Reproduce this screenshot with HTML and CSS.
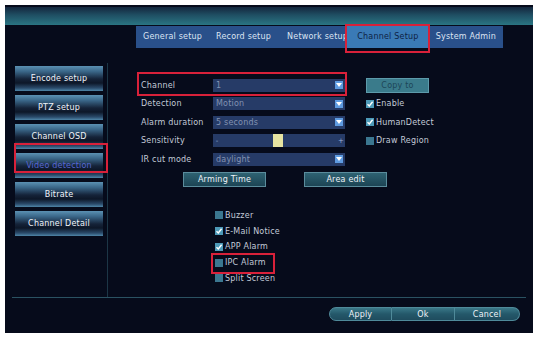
FILE: index.html
```html
<!DOCTYPE html>
<html>
<head>
<meta charset="utf-8">
<link rel="stylesheet" href="styles.css">
</head>
<body>
<div class="screen">
  <div class="titlebar"></div>
  <div class="tabs">
    <div class="tab">General setup</div>
    <div class="tab">Record setup</div>
    <div class="tab">Network setup</div>
    <div class="tab active">Channel Setup</div>
    <div class="tab">System Admin</div>
  </div>
  <div class="main">
    <div class="sidebar">
      <div class="side-btn">Encode setup</div>
      <div class="side-btn">PTZ setup</div>
      <div class="side-btn">Channel OSD</div>
      <div class="side-btn selected">Video detection</div>
      <div class="side-btn">Bitrate</div>
      <div class="side-btn">Channel Detail</div>
    </div>
    <div class="content">
      <div class="form">
        <div class="row">
          <div class="pair marked">
            <span class="label">Channel</span>
            <div class="select"><span class="val">1</span><span class="arrow"></span></div>
          </div>
          <div class="right"><div class="copy-btn">Copy to</div></div>
        </div>
        <div class="row">
          <div class="pair">
            <span class="label">Detection</span>
            <div class="select"><span class="val">Motion</span><span class="arrow"></span></div>
          </div>
          <div class="right"><span class="cb on"><svg viewBox="0 0 8 8"><polyline points="1.5,4.2 3.3,6 6.6,1.8"/></svg></span><span class="cb-label">Enable</span></div>
        </div>
        <div class="row">
          <div class="pair">
            <span class="label">Alarm duration</span>
            <div class="select"><span class="val">5 seconds</span><span class="arrow"></span></div>
          </div>
          <div class="right"><span class="cb on"><svg viewBox="0 0 8 8"><polyline points="1.5,4.2 3.3,6 6.6,1.8"/></svg></span><span class="cb-label">HumanDetect</span></div>
        </div>
        <div class="row">
          <div class="pair">
            <span class="label">Sensitivity</span>
            <div class="select slider"><span class="pm">-</span><span class="track"><span class="thumb"></span></span><span class="pm">+</span></div>
          </div>
          <div class="right"><span class="cb"></span><span class="cb-label">Draw Region</span></div>
        </div>
        <div class="row">
          <div class="pair">
            <span class="label">IR cut mode</span>
            <div class="select"><span class="val">daylight</span><span class="arrow"></span></div>
          </div>
        </div>
      </div>
      <div class="actions">
        <div class="act-btn">Arming Time</div>
        <div class="act-btn">Area edit</div>
      </div>
      <div class="checks">
        <div class="check"><span class="cb"></span><span class="cb-label">Buzzer</span></div>
        <div class="check"><span class="cb on"><svg viewBox="0 0 8 8"><polyline points="1.5,4.2 3.3,6 6.6,1.8"/></svg></span><span class="cb-label">E-Mail Notice</span></div>
        <div class="check"><span class="cb on"><svg viewBox="0 0 8 8"><polyline points="1.5,4.2 3.3,6 6.6,1.8"/></svg></span><span class="cb-label">APP Alarm</span></div>
        <div class="check marked-ipc"><span class="cb"></span><span class="cb-label">IPC Alarm</span></div>
        <div class="check"><span class="cb"></span><span class="cb-label">Split Screen</span></div>
      </div>
    </div>
  </div>
  <div class="footer">
    <div class="btn-group">
      <div class="foot-btn first">Apply</div>
      <div class="foot-btn">Ok</div>
      <div class="foot-btn last">Cancel</div>
    </div>
  </div>
</div>
</body>
</html>
```
FILE: styles.css
```css
* { box-sizing: border-box; }
body {
  margin: 0;
  background: #ffffff;
  font-family: "DejaVu Sans", Verdana, sans-serif;
  font-size: 8px;
  letter-spacing: 0.2px;
}
.screen {
  margin: 5px;
  width: 528px;
  height: 328px;
  background: #060b1b;
  overflow: hidden;
}
.titlebar {
  margin-top: 2px;
  height: 18px;
  background: linear-gradient(to bottom, #13263d 0%, #1f4f63 45%, #2a7583 100%);
}
.tabs {
  margin-top: 1px;
  margin-left: 131px;
  width: 367px;
  height: 22px;
  display: flex;
  background: #29508a;
}
.tab {
  height: 22px;
  line-height: 22px;
  padding: 0 7px;
  color: #dce4f2;
  white-space: nowrap;
}
.tab:first-child { width: 74px; }
.tab:nth-child(2) { width: 72px; }
.tab:nth-child(3) { width: 67px; }
.tab.active {
  width: 83px;
  padding: 0;
  text-align: center;
  background: #3a7ab6;
  color: #0e2244;
  position: relative;
}
.tab.active::after {
  content: "";
  position: absolute;
  left: -2px; right: -1px; top: -2px; bottom: -5px;
  border: 2px solid #d8213a;
}
.main {
  display: flex;
  height: 249px;
}
.sidebar {
  margin-top: 15px;
  width: 103px;
  height: 234px;
  border-right: 1px solid #1c3646;
  padding: 3px 0 0 10px;
  display: flex;
  flex-direction: column;
  gap: 4px;
}
.side-btn {
  width: 88px;
  height: 25px;
  line-height: 25px;
  text-align: center;
  color: #f0f4fa;
  background: linear-gradient(to bottom, #5b91b3 0%, #3a6688 22%, #152339 52%, #0d1728 68%, #2a4a6a 88%, #4f86a8 100%);
}
.side-btn.selected {
  color: #5868d4;
  position: relative;
}
.side-btn.selected::after {
  content: "";
  position: absolute;
  left: -1px; right: -5px; top: -10px; bottom: 5px;
  border: 2px solid #d8213a;
}
.content {
  flex: 1;
  padding: 28px 0 0 33px;
}
.form { display: flex; flex-direction: column; }
.row {
  height: 18.5px;
  display: flex;
  align-items: center;
}
.pair {
  display: flex;
  align-items: center;
  width: 204px;
  height: 18.5px;
}
.pair.marked { position: relative; }
.pair.marked::after {
  content: "";
  position: absolute;
  left: -4px; right: -2px; top: -4px; bottom: -1px;
  border: 2px solid #d8213a;
}
.label {
  width: 72px;
  color: #c3cad8;
  white-space: nowrap;
}
.select {
  width: 132px;
  height: 13px;
  background: #263b67;
  display: flex;
  align-items: center;
  padding: 0 2px 0 3px;
}
.val {
  flex: 1;
  color: #8292b2;
}
.arrow {
  width: 8px;
  height: 8px;
  background: #5e9be0;
  position: relative;
}
.arrow::after {
  content: "";
  position: absolute;
  left: 1px; top: 2px;
  border-left: 3px solid transparent;
  border-right: 3px solid transparent;
  border-top: 4px solid #ffffff;
}
.slider { padding: 0 1px; }
.pm {
  width: 6px;
  color: #9ab0d8;
  text-align: center;
  font-size: 7px;
}
.track {
  flex: 1;
  height: 13px;
  display: flex;
  align-items: center;
  padding-left: 53px;
}
.thumb {
  width: 10px;
  height: 13px;
  background: #e6e4a2;
}
.right {
  margin-left: 21px;
  display: flex;
  align-items: center;
}
.copy-btn {
  width: 63px;
  height: 15px;
  line-height: 13px;
  text-align: center;
  background: #3a7b8b;
  border: 1px solid #5d9bab;
  color: #1c4658;
}
.cb {
  width: 8px;
  height: 8px;
  background: #3b7790;
  display: inline-block;
  margin-right: 2px;
}
.cb.on { background: #4d9ab8; }
.cb svg {
  display: block;
  width: 8px;
  height: 8px;
  fill: none;
  stroke: #ffffff;
  stroke-width: 1.4;
}
.cb-label { color: #c3cad8; }
.actions {
  margin-top: 3px;
  margin-left: 42px;
  display: flex;
  gap: 38px;
}
.act-btn {
  width: 83px;
  height: 15px;
  line-height: 13px;
  text-align: center;
  color: #eef2f8;
  background: linear-gradient(to bottom, #2e6272 0%, #1c4454 100%);
  border: 1px solid #5a8c9c;
}
.checks {
  margin-top: 21px;
  margin-left: 74px;
  display: flex;
  flex-direction: column;
}
.check {
  height: 15.75px;
  display: flex;
  align-items: center;
}
.marked-ipc {
  position: relative;
  width: 58px;
}
.marked-ipc::after {
  content: "";
  position: absolute;
  left: -4px; right: -2px; top: -2px; bottom: -3px;
  border: 2px solid #d8213a;
}
.footer {
  margin-left: 7px;
  width: 514px;
  border-top: 1px solid #2a5262;
  padding-top: 9px;
  padding-right: 6px;
  display: flex;
  justify-content: flex-end;
}
.btn-group { display: flex; }
.foot-btn {
  width: 63px;
  height: 14px;
  line-height: 13px;
  text-align: center;
  color: #eef2f8;
  background: linear-gradient(to bottom, #3a7888 0%, #24586a 50%, #1f4c5e 100%);
  border: 1px solid #4f8a9a;
  border-left: none;
}
.foot-btn.first {
  border-left: 1px solid #4f8a9a;
  border-radius: 7px 0 0 7px;
}
.foot-btn.last {
  width: 65px;
  border-radius: 0 7px 7px 0;
}
```
